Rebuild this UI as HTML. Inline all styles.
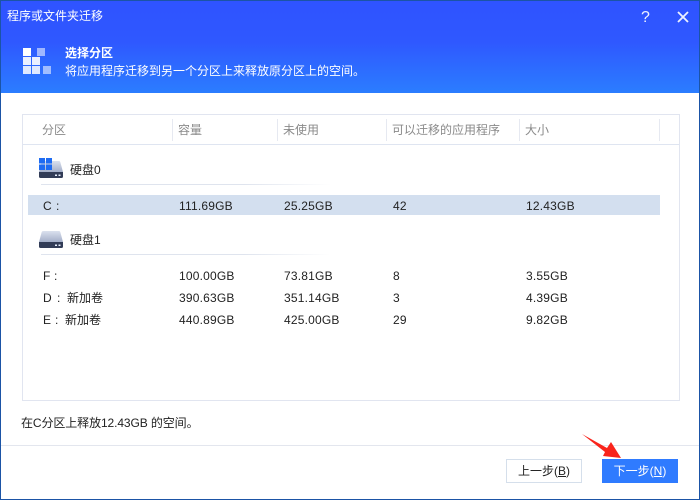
<!DOCTYPE html>
<html lang="zh">
<head>
<meta charset="utf-8">
<title>程序或文件夹迁移</title>
<style>
html,body{margin:0;padding:0;background:#fff}
body{width:700px;height:500px;position:relative;overflow:hidden;font-family:"Liberation Sans","Noto Sans CJK SC",sans-serif;font-size:12px;color:#222}
.a{position:absolute;white-space:nowrap;line-height:16px}
.frame{position:absolute;left:0;top:0;width:698px;height:498px;border:1px solid #1b54a6;z-index:9;pointer-events:none}
.head{position:absolute;left:0;top:0;width:700px;height:93px;background:linear-gradient(180deg,#2f53ff 0%,#2f58ff 45%,#2b7dff 100%)}
.w{color:#fff}
.sq{position:absolute;background:#fff}
.th{color:#8a8a8a;top:122px}
.sep{position:absolute;top:119px;width:1px;height:22px;background:#e6e9f1}
.line{position:absolute;left:41px;width:290px;height:1px;background:linear-gradient(90deg,#dfe4ee 0%,#dfe4ee 70%,#fff 100%)}
.btn{position:absolute;top:459px;width:76px;height:24px;box-sizing:border-box;text-align:center;line-height:22px}
.n{letter-spacing:.2px}
u{text-underline-offset:1px}
</style>
</head>
<body>
<div class="head"></div>
<div class="a w" style="left:7px;top:8px">程序或文件夹迁移</div>
<div class="a w" style="left:641px;top:9px;font-size:16px;line-height:18px;color:#eef2ff">?</div>
<svg class="a" style="left:676px;top:10px" width="14" height="14" viewBox="0 0 14 14"><path d="M2 2L12 12M12 2L2 12" stroke="#eef2ff" stroke-width="1.8" fill="none"/></svg>

<div class="sq" style="left:23px;top:48px;width:8px;height:8px"></div>
<div class="sq" style="left:37px;top:48px;width:8px;height:8px;opacity:.55"></div>
<div class="sq" style="left:23px;top:57px;width:8px;height:8px;opacity:.9"></div>
<div class="sq" style="left:32px;top:57px;width:8px;height:8px;opacity:.9"></div>
<div class="sq" style="left:23px;top:66px;width:8px;height:8px;opacity:.85"></div>
<div class="sq" style="left:32px;top:66px;width:8px;height:8px;opacity:.85"></div>
<div class="sq" style="left:43px;top:66px;width:8px;height:8px;opacity:.55"></div>

<div class="a w" style="left:65px;top:45px;font-weight:bold">选择分区</div>
<div class="a w" style="left:65px;top:63px">将应用程序迁移到另一个分区上来释放原分区上的空间。</div>

<div style="position:absolute;left:22px;top:114px;width:656px;height:285px;border:1px solid #e1e5f0"></div>
<div style="position:absolute;left:23px;top:144px;width:656px;height:1px;background:#dfe5f1"></div>
<div class="sep" style="left:172px"></div>
<div class="sep" style="left:277px"></div>
<div class="sep" style="left:386px"></div>
<div class="sep" style="left:519px"></div>
<div class="sep" style="left:659px"></div>

<div class="a th" style="left:42px">分区</div>
<div class="a th" style="left:178px">容量</div>
<div class="a th" style="left:283px">未使用</div>
<div class="a th" style="left:392px">可以迁移的应用程序</div>
<div class="a th" style="left:525px">大小</div>

<!-- Disk 0 -->
<svg class="a" style="left:38px;top:157px" width="26" height="22" viewBox="0 0 26 22">
<defs><linearGradient id="g" x1="0" y1="0" x2="0" y2="1"><stop offset="0" stop-color="#dbe1ee"/><stop offset="1" stop-color="#a3aec8"/></linearGradient></defs>
<path d="M5.500 4H21Q22 4 22.300 5L25 15H1L3.700 5Q4 4 5.500 4Z" fill="url(#g)"/>
<path d="M1 15H25V19.500Q25 21 23.500 21H2.500Q1 21 1 19.500Z" fill="#323c57"/>
<rect x="17" y="17.500" width="2" height="1.500" fill="#e8f0ff"/><rect x="20.500" y="17.500" width="2" height="1.500" fill="#e8f0ff"/>
<rect x="1" y="1" width="6" height="5.500" fill="#1f6cf2"/><rect x="8" y="1" width="6" height="5.500" fill="#1f6cf2"/>
<rect x="1" y="7.500" width="6" height="5.500" fill="#1f6cf2"/><rect x="8" y="7.500" width="6" height="5.500" fill="#1f6cf2"/>
</svg>
<div class="a" style="left:70px;top:162px">硬盘0</div>
<div class="line" style="top:184px"></div>

<div style="position:absolute;left:28px;top:195px;width:632px;height:20px;background:#d3dfef"></div>
<div class="a" style="left:43px;top:198px">C</div><div class="a" style="left:56px;top:198px">:</div>
<div class="a n" style="left:179px;top:198px">111.69GB</div>
<div class="a n" style="left:284px;top:198px">25.25GB</div>
<div class="a n" style="left:393px;top:198px">42</div>
<div class="a n" style="left:526px;top:198px">12.43GB</div>

<!-- Disk 1 -->
<svg class="a" style="left:38px;top:229px" width="26" height="20" viewBox="0 0 26 20">
<path d="M5.500 2H21Q22 2 22.300 3L25 13H1L3.700 3Q4 2 5.500 2Z" fill="url(#g)"/>
<path d="M1 13H25V17.500Q25 19 23.500 19H2.500Q1 19 1 17.500Z" fill="#323c57"/>
<rect x="17" y="15.500" width="2" height="1.500" fill="#e8f0ff"/><rect x="20.500" y="15.500" width="2" height="1.500" fill="#e8f0ff"/>
</svg>
<div class="a" style="left:70px;top:232px">硬盘1</div>
<div class="line" style="top:254px"></div>

<div class="a" style="left:43px;top:268px">F</div><div class="a" style="left:54px;top:268px">:</div>
<div class="a n" style="left:179px;top:268px">100.00GB</div>
<div class="a n" style="left:284px;top:268px">73.81GB</div>
<div class="a n" style="left:393px;top:268px">8</div>
<div class="a n" style="left:526px;top:268px">3.55GB</div>

<div class="a" style="left:43px;top:290px">D</div><div class="a" style="left:57px;top:290px">:</div>
<div class="a" style="left:67px;top:290px">新加卷</div>
<div class="a n" style="left:179px;top:290px">390.63GB</div>
<div class="a n" style="left:284px;top:290px">351.14GB</div>
<div class="a n" style="left:393px;top:290px">3</div>
<div class="a n" style="left:526px;top:290px">4.39GB</div>

<div class="a" style="left:43px;top:312px">E</div><div class="a" style="left:55px;top:312px">:</div>
<div class="a" style="left:65px;top:312px">新加卷</div>
<div class="a n" style="left:179px;top:312px">440.89GB</div>
<div class="a n" style="left:284px;top:312px">425.00GB</div>
<div class="a n" style="left:393px;top:312px">29</div>
<div class="a n" style="left:526px;top:312px">9.82GB</div>

<div class="a" style="left:21px;top:415px;letter-spacing:-.1px">在C分区上释放12.43GB 的空间。</div>
<div style="position:absolute;left:0;top:445px;width:700px;height:1px;background:#e3e6ee"></div>

<div class="btn" style="left:506px;border:1px solid #d5dfeb;background:#fff">上一步(<u>B</u>)</div>
<div class="btn" style="left:602px;background:#2f7bff;color:#fff;line-height:24px">下一步(<u>N</u>)</div>

<svg class="a" style="left:580px;top:432px;z-index:5" width="46" height="30" viewBox="0 0 46 30">
<path d="M2 2L27 16L31 10L41 26L23 24L25 20Z" fill="#f9241c"/>
</svg>
<div class="frame"></div>
</body>
</html>
